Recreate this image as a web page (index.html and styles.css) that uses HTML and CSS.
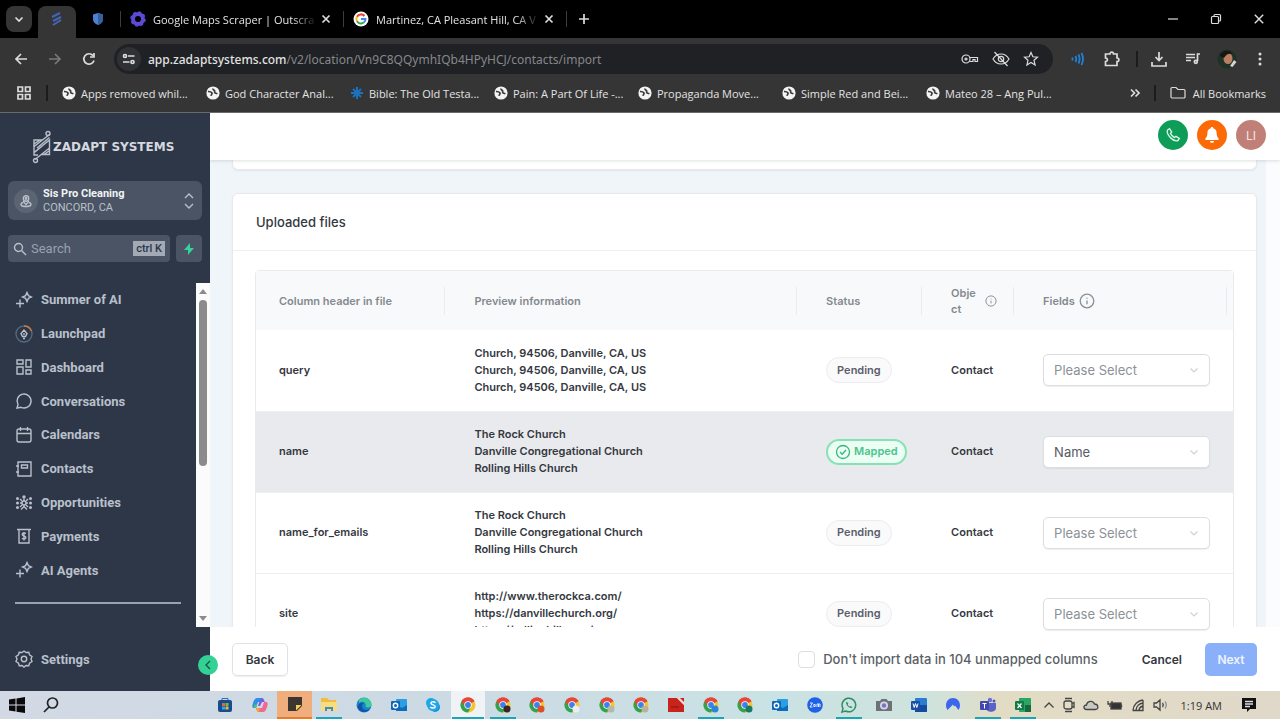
FILE: index.html
```html
<!DOCTYPE html>
<html lang="en">
<head>
  <meta charset="UTF-8" />
  <meta name="viewport" content="width=device-width, initial-scale=1.0" />
  <title>Zadapt Systems - Import contacts</title>
  <link rel="stylesheet" href="styles.css">
</head>
<body>
  <!-- shared icons -->
  <svg class="sprite" aria-hidden="true">
    <symbol id="globe" viewBox="0 0 14 14"><circle cx="7" cy="7" r="6.6" fill="#f1f3f4"/><path d="M2 5.500c2 .2 3.600.3 4 1.500.3 1-1 1.300-.8 2.800M7 2.500c-.4 1.500 1.200 1.200 1.600 2.300.3 1-.6 1.700.6 2.200 1 .4 1.500.2 2 1" fill="none" stroke="#3a3a3a" stroke-width="1.700"/></symbol>
    <symbol id="chrome" viewBox="0 0 16 16"><circle cx="8" cy="8" r="7.500" fill="#f7c52b"/><path d="M8 8 1.500 4.250A7.500 7.500 0 0 1 14.500 4.250z" fill="#e5473a"/><path d="M8 8 1.500 4.250A7.500 7.500 0 0 0 8 15.500l3-5.500z" fill="#2fa352"/><path d="M8 4.300h6.500A7.500 7.500 0 0 0 1.500 4.250L4.800 9.800z" fill="#e5473a"/><circle cx="8" cy="8" r="3.700" fill="#fff"/><circle cx="8" cy="8" r="2.900" fill="#3d80ea"/></symbol>
    <symbol id="outlook" viewBox="0 0 16 16"><rect x="5" y="2" width="11" height="12" rx="1" fill="#2a9fe4"/><path d="M5 8l6 3 5-3v6H5z" fill="#0f6cbd"/><rect y="4" width="9" height="9" rx="1" fill="#0f67b8"/><circle cx="4.500" cy="8.500" r="2.200" fill="none" stroke="#fff" stroke-width="1.400"/></symbol>
    <symbol id="sparkle" viewBox="0 0 18 18"><path d="M12 1.500l1.400 3.100 3.100 1.400-3.100 1.400L12 10.500l-1.400-3.100L7.500 6l3.100-1.400zM5 8.500v8M1 12.500h8"/></symbol>
    <symbol id="info" viewBox="0 0 16 16"><circle cx="8" cy="8" r="6.800"/><path d="M8 7.500v3.700M8 4.800v1"/></symbol>
    <symbol id="down" viewBox="0 0 10 10"><path d="M1.500 3.500 5 7l3.500-3.500"/></symbol>
    <symbol id="close" viewBox="0 0 10 10"><path d="M1.500 1.500l7 7M8.500 1.500l-7 7"/></symbol>
  </svg>

  <header class="browser">
    <div class="tabs">
      <button class="tab-search" aria-label="Search tabs"><svg class="line" width="10" height="10"><use href="#down"/></svg></button>
      <div class="tab tab-active"><svg width="14" height="16" viewBox="0 0 14 16" fill="none" stroke="#4166b8" stroke-width="2"><path d="M2 6l8-4M3 10l8-4M3 14l8-5"/></svg></div>
      <div class="tab tab-pinned"><svg width="14" height="14" viewBox="0 0 14 14"><path d="M7 1l5 1.500v5C12 10 10 12 7 13 4 12 2 10 2 7.500v-5z" fill="#4f7fd0"/><path d="M7 1v12c3-1 5-3 5-5.500v-5z" fill="#35609f"/></svg></div>
      <div class="tab tab-wide">
        <svg width="16" height="16" viewBox="0 0 16 16"><circle cx="8" cy="8" r="5" fill="none" stroke="#5b4ad6" stroke-width="4"/><circle cx="8" cy="8" r="7" fill="none" stroke="#5b4ad6" stroke-width="1.500" stroke-dasharray="3 2.500"/></svg>
        <span class="tab-title">Google Maps Scraper | Outscra</span>
        <button class="tab-close" aria-label="Close tab"><svg class="line" width="10" height="10"><use href="#close"/></svg></button>
      </div>
      <div class="tab tab-wide">
        <svg width="16" height="16" viewBox="0 0 16 16"><circle cx="8" cy="8" r="7.500" fill="#fff"/><g fill="none" stroke-width="2"><path d="M11.500 5A4.600 4.600 0 0 0 4 5.700" stroke="#ea4335"/><path d="M4 5.700a4.600 4.600 0 0 0 0 4.600" stroke="#fbbc05"/><path d="M4 10.300a4.600 4.600 0 0 0 7 1" stroke="#34a853"/><path d="M11 11.300A4.600 4.600 0 0 0 12.500 8H8" stroke="#4285f4"/></g></svg>
        <span class="tab-title">Martinez, CA Pleasant Hill, CA V</span>
        <button class="tab-close" aria-label="Close tab"><svg class="line" width="10" height="10"><use href="#close"/></svg></button>
      </div>
      <button class="tab-new" aria-label="New tab"><svg class="line" width="12" height="12" viewBox="0 0 12 12"><path d="M6 1v10M1 6h10"/></svg></button>
      <div class="window-controls">
        <button aria-label="Minimize"><svg class="thin" width="12" height="12" viewBox="0 0 12 12"><path d="M1 6h10"/></svg></button>
        <button aria-label="Restore"><svg class="thin" width="12" height="12" viewBox="0 0 12 12"><rect x="1.500" y="3.500" width="7" height="7" rx="1"/><path d="M4 3.500v-1c0-.6.4-1 1-1h4.500c.6 0 1 .4 1 1V7c0 .6-.4 1-1 1h-1"/></svg></button>
        <button aria-label="Close window"><svg class="thin" width="12" height="12"><use href="#close"/></svg></button>
      </div>
    </div>

    <div class="toolbar">
      <button aria-label="Back"><svg class="line" width="14" height="14" viewBox="0 0 14 14"><path d="M13 7H2M7 2 2 7l5 5"/></svg></button>
      <button class="dim" aria-label="Forward"><svg class="line" width="14" height="14" viewBox="0 0 14 14"><path d="M1 7h11M7 2l5 5-5 5"/></svg></button>
      <button aria-label="Reload"><svg class="line" width="14" height="14" viewBox="0 0 14 14"><path d="M12 8.500A5.200 5.200 0 1 1 11 3.600M12 1v4H8"/></svg></button>
      <div class="address">
        <span class="site-info"><svg class="line" width="14" height="14" viewBox="0 0 14 14"><path d="M6 4h6.500M1 10h6.500"/><circle cx="3" cy="4" r="1.500"/><circle cx="10.500" cy="10" r="1.500"/></svg></span>
        <span class="url"><b>app.zadaptsystems.com</b>/v2/location/Vn9C8QQymhIQb4HPyHCJ/contacts/import</span>
        <svg class="thin" width="18" height="14" viewBox="0 0 18 14"><circle cx="5" cy="7" r="4"/><circle cx="5" cy="7" r="1"/><path d="M9 5.500h7.500v4H14v-2h-2v2H8.500"/></svg>
        <svg class="thin" width="18" height="16" viewBox="0 0 18 16"><path d="M1 8c2-3.500 5-5 8-5s6 1.500 8 5c-2 3.500-5 5-8 5s-6-1.500-8-5z"/><circle cx="9" cy="8" r="2.700"/><path d="M2.500 1l13 14"/></svg>
        <svg class="thin" width="16" height="16" viewBox="0 0 16 16"><path d="M8 1.500l1.900 4.300 4.600.4-3.500 3.100 1.100 4.600L8 11.500l-4.100 2.400L5 9.300 1.500 6.200l4.600-.4z"/></svg>
      </div>
      <button aria-label="Audio"><svg width="14" height="14" viewBox="0 0 14 14" fill="none" stroke="#2181d8" stroke-width="1.800"><path d="M1.500 5.500v3M4.500 4c1 2 1 4 0 6M7.500 2.500c1.500 3 1.500 6 0 9M10.500 1c2 4 2 8 0 12"/></svg></button>
      <button aria-label="Extensions"><svg class="line" width="18" height="18" viewBox="0 0 18 18"><path d="M2.500 4H7c0-2.500 3.500-2.500 3.500 0H14v4c2.500 0 2.500 3.500 0 3.500v4H2.500v-4c2.500 0 2.500-3.500 0-3.500z"/></svg></button>
      <i class="bar"></i>
      <button aria-label="Downloads"><svg class="line" width="18" height="18" viewBox="0 0 18 18"><path d="M9 2v8M5.500 7 9 10.500 12.500 7M2 12v4h14v-4"/></svg></button>
      <button aria-label="Media"><svg class="line" width="16" height="16" viewBox="0 0 16 16"><path d="M1 3.500h9M1 6.500h9M1 9.500h5M12.500 10V3H15"/><circle cx="10.800" cy="10.800" r="1.500"/></svg></button>
      <button class="profile" aria-label="Profile"><svg width="20" height="20" viewBox="0 0 20 20"><circle cx="10" cy="10" r="9.500" fill="#1d3325"/><ellipse cx="11" cy="9.500" rx="4.500" ry="5.500" fill="#b97f63"/><path d="M3 7C5 0 14 1 15 5c-3-1-6 0-8 4z" fill="#1a1413"/><path d="M13 17l4-6 2.500 2-4 5z" fill="#d7d3d6"/></svg></button>
      <button aria-label="Menu"><svg width="4" height="16" viewBox="0 0 4 16" fill="#dcdcdc"><circle cx="2" cy="3" r="1.500"/><circle cx="2" cy="8" r="1.500"/><circle cx="2" cy="13" r="1.500"/></svg></button>
    </div>

    <nav class="bookmarks">
      <svg class="line apps" width="16" height="16" viewBox="0 0 16 16"><path d="M2 2h4.500v4.500H2zM9.500 2H14v4.500H9.500zM2 9.500h4.500V14H2zM9.500 9.500H14V14H9.500z"/></svg>
      <i class="bar"></i>
      <a href="#"><svg width="14" height="14"><use href="#globe"/></svg>Apps removed whil...</a>
      <a href="#"><svg width="14" height="14"><use href="#globe"/></svg>God Character Anal...</a>
      <a href="#"><svg width="14" height="14" viewBox="0 0 14 14" stroke="#1b73bd" stroke-width="2"><path d="M7 1v12M1 7h12M3 3l8 8M11 3l-8 8"/></svg>Bible: The Old Testa...</a>
      <a href="#"><svg width="14" height="14"><use href="#globe"/></svg>Pain: A Part Of Life -...</a>
      <a href="#"><svg width="14" height="14"><use href="#globe"/></svg>Propaganda Move...</a>
      <a href="#"><svg width="14" height="14"><use href="#globe"/></svg>Simple Red and Bei...</a>
      <a href="#"><svg width="14" height="14"><use href="#globe"/></svg>Mateo 28 – Ang Pul...</a>
      <div class="bookmarks-end">
        <button aria-label="More bookmarks"><svg class="line" width="10" height="10" viewBox="0 0 10 10"><path d="M1 1.500 4.500 5 1 8.500M5.500 1.500 9 5 5.500 8.500"/></svg></button>
        <i class="bar"></i>
        <a href="#"><svg class="thin" width="16" height="14" viewBox="0 0 16 14"><path d="M1 2.500C1 2 1.500 1.500 2 1.500h4l2 2h6c.5 0 1 .5 1 1V11c0 .5-.5 1-1 1H2c-.5 0-1-.5-1-1z"/></svg>All Bookmarks</a>
      </div>
    </nav>
  </header>

  <div class="app">
    <aside class="sidebar">
      <div class="logo">
        <svg width="20" height="34" viewBox="0 0 20 34"><path d="M3 29.500 17.500 18V10L2 22.500M17.500 4.500 2 16.500V10h8.500M2 17v8h4M2 14l6-4M5 18 17.500 7.500M3 22l12-10M17.500 18v6.500H9M17 21l-5 3.500"/><circle cx="16" cy="3.500" r="2"/><circle cx="3.500" cy="30.500" r="2"/></svg>
        <span>ZADAPT SYSTEMS</span>
      </div>
      <button class="location">
        <span class="location-icon"><svg width="14" height="14" viewBox="0 0 14 14"><circle cx="7" cy="4.500" r="2.700"/><circle cx="7" cy="4.500" r=".7"/><path d="M4.500 7c0 2 1.500 2 2.500 3.500C8 9 9.500 9 9.500 7M4 8.500c-3 1-3 4 3 4s6-3 3-4"/></svg></span>
        <span class="location-text"><strong>Sis Pro Cleaning</strong><span>CONCORD, CA</span></span>
        <svg width="10" height="16" viewBox="0 0 10 16"><path d="M1 5l4-4 4 4M1 11l4 4 4-4"/></svg>
      </button>
      <div class="search-row">
        <label class="search">
          <svg width="14" height="14" viewBox="0 0 14 14"><circle cx="5.500" cy="5.500" r="4"/><path d="M8.500 8.500 13 13"/></svg>
          <input type="text" placeholder="Search" aria-label="Search">
          <kbd>ctrl K</kbd>
        </label>
        <button class="bolt" aria-label="Quick actions"><svg width="12" height="14" viewBox="0 0 12 14"><path d="M7 1 1 8h4v5l6-7H7z" fill="#31d49b"/></svg></button>
      </div>
      <div class="nav-scroll">
        <nav class="nav-list">
          <div class="nav-items">
            <a href="#"><svg width="18" height="18"><use href="#sparkle"/></svg>Summer of AI</a>
            <a href="#"><svg width="18" height="18" viewBox="0 0 18 18"><circle cx="9" cy="9" r="8" stroke="#56677c"/><path d="M9 1a8 8 0 0 1 7.500 5" stroke="#c97b3c"/><path d="M7.500 11.500 6 8.500 9 5l3 3.500-1.500 3zM9 8v2M8 13.500h2"/></svg>Launchpad</a>
            <a href="#"><svg width="18" height="18" viewBox="0 0 18 18"><path d="M2 2h6v4H2zM11 2h5v7h-5zM2 9h6v7H2zM11 12h5v4h-5z"/></svg>Dashboard</a>
            <a href="#"><svg width="18" height="18" viewBox="0 0 18 18"><path d="M2 16l1-3.500A7 7 0 1 1 6 15.300z"/></svg>Conversations</a>
            <a href="#"><svg width="18" height="18" viewBox="0 0 18 18"><rect x="2" y="3" width="14" height="13" rx="2"/><path d="M2 7.500h14M5.500 1v4M12.500 1v4"/></svg>Calendars</a>
            <a href="#"><svg width="18" height="18" viewBox="0 0 18 18"><path d="M3 2h13v14H3zM1 6h3M1 12h3M6.500 5h6v3h-6z"/></svg>Contacts</a>
            <a href="#"><svg width="18" height="18" viewBox="0 0 18 18"><circle cx="9" cy="9" r="2"/><path d="M9 4.500V7M9 11v3M6 15.500l3-3 3 3M5 9h2M11 9h2M5 5l2 2M13 5l-2 2M5 13l2-2M13 13l-2-2"/><g fill="#b9c0cb"><circle cx="9" cy="3" r="1"/><circle cx="2.500" cy="4.500" r=".8"/><circle cx="15.500" cy="4.500" r=".8"/><circle cx="2.500" cy="9" r=".8"/><circle cx="15.500" cy="9" r=".8"/><circle cx="2.500" cy="13.500" r=".8"/><circle cx="15.500" cy="13.500" r=".8"/></g></svg>Opportunities</a>
            <a href="#"><svg width="18" height="18" viewBox="0 0 18 18"><path d="M2 2.500h14M4 2.500V16h10V2.500M11 6.500C8.500 5 6.500 6.500 7.500 8s4 .8 3.300 3c-.5 1.300-2.500 1.300-3.800.3M9 5v8.500"/></svg>Payments</a>
            <a href="#"><svg width="18" height="18"><use href="#sparkle"/></svg>AI Agents</a>
          </div>
          <hr>
        </nav>
        <div class="scrollbar"><i class="arrow-up"></i><i class="thumb"></i><i class="arrow-down"></i></div>
      </div>
      <a class="settings" href="#"><svg width="18" height="18" viewBox="0 0 18 18"><path d="M9 1l2 1.500 2.800-.3.700 2.700L17 6.500 16 9l1 2.500-2.500 1.600-.7 2.700-2.800-.3L9 17l-2-1.500-2.800.3-.7-2.700L1 11.500 2 9 1 6.500l2.500-1.600.7-2.700 2.800.3z"/><circle cx="9" cy="9" r="2.700"/></svg>Settings</a>
      <button class="collapse" aria-label="Collapse sidebar"><svg width="8" height="10" viewBox="0 0 8 10"><path d="M6 1 2 5l4 4"/></svg></button>
    </aside>

    <main class="main">
      <header class="topbar">
        <button class="round green" aria-label="Call"><svg width="16" height="16" viewBox="0 0 16 16" fill="none" stroke="#d9f6e6" stroke-width="1.400"><path d="M2.500 3 4.500 1.700 6.700 5 5.500 6.500c.8 1.800 2 3 4 4l1.500-1.200 3.300 2.200L13 13.500C9 15.500 1 8 2.500 3z"/></svg></button>
        <button class="round orange" aria-label="Notifications"><svg width="16" height="18" viewBox="0 0 16 18" fill="#fff"><path d="M8 1c.8 0 1.300.5 1.300 1.200C11.500 2.800 12.600 4.600 12.600 7c0 3 .9 4.300 2 5.500V14H1.400v-1.500c1.100-1.200 2-2.500 2-5.500 0-2.400 1.100-4.200 3.300-4.800C6.700 1.500 7.200 1 8 1zM6 15h4a2 2 0 0 1-4 0z"/></svg></button>
        <button class="round rose">LI</button>
      </header>

      <div class="content">
        <div class="scroll-area">
          <section class="card card-prev"></section>
          <section class="card">
            <h2>Uploaded files</h2>
            <div class="table-wrap">
              <table>
                <colgroup><col class="c-header"><col class="c-preview"><col class="c-status"><col class="c-object"><col class="c-fields"></colgroup>
                <thead>
                  <tr>
                    <th><div>Column header in file</div></th>
                    <th><div>Preview information</div></th>
                    <th><div>Status</div></th>
                    <th><div><span class="object-label">Object</span><svg width="12" height="12"><use href="#info"/></svg></div></th>
                    <th><div>Fields<svg width="16" height="16"><use href="#info"/></svg></div></th>
                  </tr>
                </thead>
                <tbody>
                  <tr>
                    <td>query</td>
                    <td>Church, 94506, Danville, CA, US<br>Church, 94506, Danville, CA, US<br>Church, 94506, Danville, CA, US</td>
                    <td><span class="tag">Pending</span></td>
                    <td>Contact</td>
                    <td><div class="select empty"><select aria-label="Field for query"><option>Please Select</option></select><svg width="10" height="10"><use href="#down"/></svg></div></td>
                  </tr>
                  <tr class="active">
                    <td>name</td>
                    <td>The Rock Church<br>Danville Congregational Church<br>Rolling Hills Church</td>
                    <td><span class="tag mapped"><svg width="16" height="16" viewBox="0 0 16 16"><circle cx="8" cy="8" r="6.500"/><path d="M5 8l2.200 2.200L11 6"/></svg>Mapped</span></td>
                    <td>Contact</td>
                    <td><div class="select"><select aria-label="Field for name"><option>Name</option></select><svg width="10" height="10"><use href="#down"/></svg></div></td>
                  </tr>
                  <tr>
                    <td>name_for_emails</td>
                    <td>The Rock Church<br>Danville Congregational Church<br>Rolling Hills Church</td>
                    <td><span class="tag">Pending</span></td>
                    <td>Contact</td>
                    <td><div class="select empty"><select aria-label="Field for name_for_emails"><option>Please Select</option></select><svg width="10" height="10"><use href="#down"/></svg></div></td>
                  </tr>
                  <tr>
                    <td>site</td>
                    <td>http://www.therockca.com/<br>https://danvillechurch.org/<br>https://rollinghills.org/</td>
                    <td><span class="tag">Pending</span></td>
                    <td>Contact</td>
                    <td><div class="select empty"><select aria-label="Field for site"><option>Please Select</option></select><svg width="10" height="10"><use href="#down"/></svg></div></td>
                  </tr>
                </tbody>
              </table>
            </div>
          </section>
        </div>
      </div>

      <footer class="actions">
        <button class="btn btn-back">Back</button>
        <label class="skip"><input type="checkbox">Don't import data in 104 unmapped columns</label>
        <button class="btn btn-cancel">Cancel</button>
        <button class="btn btn-next">Next</button>
      </footer>
    </main>
  </div>

  <footer class="taskbar">
    <div class="start">
      <svg width="16" height="16" viewBox="0 0 16 16" fill="#0a0a0a"><path d="M0 2.500 6.500 1.500v6H0zM7.500 1.400 16 0v7.500H7.500zM0 8.500h6.500v6L0 13.500zM7.500 8.500H16V16l-8.500-1.300z"/></svg>
      <svg width="16" height="16" viewBox="0 0 16 16" fill="none" stroke="#222" stroke-width="1.700"><circle cx="9.500" cy="6" r="5"/><path d="M6 10l-5 5"/></svg>
    </div>
    <div class="pinned">
      <span><svg width="16" height="16" viewBox="0 0 16 16"><rect x="1" y="3" width="14" height="12" rx="2" fill="#174d8c"/><path d="M5 3V1.500h6V3" fill="none" stroke="#2573b8"/><path d="M5 6h3v3H5z" fill="#e8623a"/><path d="M8.500 6h3v3h-3z" fill="#7cbb42"/><path d="M5 9.500h3v3H5z" fill="#35a4e8"/><path d="M8.500 9.500h3v3h-3z" fill="#f4b92f"/></svg></span>
      <span><svg width="16" height="16" viewBox="0 0 16 16"><path d="M5 1h5l2 4H6L4 11H2C0 11 0 9 1 6s2-5 4-5z" fill="#2d8fe6"/><path d="M10 1c2 0 2 3 3 4h-3L8 9H6l2-6z" fill="#7a5ce0"/><path d="M11 15H6l-2-4h6l2-6h2c2 0 2 2 1 5s-2 5-4 5z" fill="#ee6b8f"/><path d="M4 11h4l-1 4C5 15 4 13 4 11z" fill="#f0a13a"/><path d="M2 8l3-1-1 4H2z" fill="#4fc07a"/></svg></span>
      <span class="alert"><svg width="14" height="14" viewBox="0 0 14 14"><path d="M0 0h14v9l-5 5H0z" fill="#3b3631"/><path d="M8 8h5.500L8 13.500z" fill="#f7d04b"/></svg></span>
      <span class="open"><svg width="16" height="16" viewBox="0 0 16 16"><path d="M0 1h6l2 2h7v10H0z" fill="#f0bd3f"/><path d="M0 5h16v9H0z" fill="#fbdc7c"/><path d="M4 14v-4h8v4h-2v-2H6v2z" fill="#3b8dc9"/></svg></span>
      <span><svg width="16" height="16" viewBox="0 0 16 16"><circle cx="8" cy="8" r="7.500" fill="#1583cf"/><path d="M3 3c5-5 13-1 12.500 5-.5 3-5 3-6 1.500C11 6 7 3 3 6z" fill="#3ecb98"/><path d="M6 9c0 4 4 5 8 3-3 4-10 4-12-1C1 7 5 5 8 6 6 7 6 8 6 9z" fill="#1254a3"/></svg></span>
      <span><svg width="16" height="16"><use href="#outlook"/></svg></span>
      <span><svg width="16" height="16" viewBox="0 0 16 16"><circle cx="6" cy="6" r="5" fill="#1aa6e8"/><circle cx="10" cy="10" r="5" fill="#1690d4"/><circle cx="8" cy="8" r="6" fill="#20a8ea"/><path d="M10.500 5.800C8.500 4 5.500 5 6 6.500S10.500 8 10.300 9.700 6.500 11.500 5.300 10" fill="none" stroke="#fff" stroke-width="1.400"/></svg></span>
      <span class="open current"><svg width="16" height="16"><use href="#chrome"/></svg></span>
      <span class="open"><svg width="16" height="16"><use href="#chrome"/><circle cx="12" cy="12" r="3.500" fill="#3a2522"/></svg></span>
      <span><svg width="16" height="16"><use href="#chrome"/><circle cx="12" cy="12" r="3.500" fill="#d9512c"/></svg></span>
      <span><svg width="16" height="16"><use href="#chrome"/><circle cx="12" cy="12" r="3.500" fill="#e9eef2"/></svg></span>
      <span><svg width="16" height="16"><use href="#chrome"/><circle cx="12" cy="12" r="3.500" fill="#b5b9a8"/></svg></span>
      <span><svg width="16" height="16"><use href="#chrome"/><circle cx="12" cy="12" r="3.500" fill="#b9b39b"/></svg></span>
      <span><svg width="16" height="16" viewBox="0 0 16 16"><path d="M0 1h9l7 7v7H0z" fill="#c8231d"/><path d="M9 1l7 7V1z" fill="#efd9d6"/><path d="M12 1l4 0v4z" fill="#c8231d"/><path d="M3 10h8" stroke="#8e1511"/></svg></span>
      <span class="open"><svg width="16" height="16"><use href="#chrome"/><circle cx="12" cy="12" r="3.500" fill="#2c86d8"/></svg></span>
      <span><svg width="16" height="16"><use href="#chrome"/><circle cx="12" cy="12" r="3.500" fill="#177a62"/></svg></span>
      <span><svg width="16" height="16"><use href="#outlook"/></svg></span>
      <span><svg width="16" height="16" viewBox="0 0 16 16"><circle cx="8" cy="8" r="7.800" fill="#1f62e6"/><path d="M3 6h2.500L3 10h2.500M6.800 7.500h1.400v2H6.800zM10 10V7h3v3M11.500 7v3" fill="none" stroke="#dfe9ff"/></svg></span>
      <span class="open"><svg width="16" height="16" viewBox="0 0 16 16" fill="none" stroke="#2f8f62" stroke-width="1.500"><path d="M1 15l1-3.600A6.800 6.800 0 1 1 4.700 14z"/><path d="M5.500 4.500c-1 1.500 0 3.500 1.500 5s3.300 2 4.500.8l-1.700-1.300-1 .6C7.700 9 7.200 8.300 6.800 7.200l.6-.8z" fill="#2f8f62" stroke="none"/></svg></span>
      <span><svg width="16" height="14" viewBox="0 0 16 14"><path d="M0 3h4l1.500-2h5L12 3h4v10H0z" fill="#6c7278"/><circle cx="8" cy="7.500" r="4" fill="#d8d5ee"/><circle cx="8" cy="7.500" r="2.200" fill="#7b76b8"/></svg></span>
      <span><svg width="16" height="16" viewBox="0 0 16 16"><rect x="4" y="1" width="12" height="14" rx="1" fill="#2b7cd3"/><path d="M4 8h12v6c0 .6-.4 1-1 1H4z" fill="#164a9e"/><rect y="4" width="9" height="9" rx="1" fill="#174fa8"/><path d="M2 6.500l1.200 4 1.300-4 1.300 4 1.200-4" fill="none" stroke="#fff"/></svg></span>
      <span><svg width="16" height="16" viewBox="0 0 16 16"><path d="M2.500 13C-1 8 2 1 8 1s9 7 5.500 12L10 8.500 9 9.500 8 7.500z" fill="#3d66ec"/></svg></span>
      <span class="open"><svg width="16" height="16" viewBox="0 0 16 16"><circle cx="10" cy="3" r="2.200" fill="#6a70d0"/><circle cx="14" cy="4" r="1.500" fill="#4e55bd"/><path d="M6 6h10v5c0 5-10 5-10 0z" fill="#5c63c8"/><rect y="4" width="9" height="9" rx="1" fill="#4249ae"/><path d="M2.500 6.500h4M4.500 6.500v5" stroke="#fff"/></svg></span>
      <span class="open"><svg width="16" height="16" viewBox="0 0 16 16"><rect x="4" y="1" width="12" height="14" rx="1" fill="#2aa566"/><path d="M10 8h6v7h-6z" fill="#15693c"/><rect y="4" width="9" height="9" rx="1" fill="#117a43"/><path d="M2.500 6.500l4 4.500M6.500 6.500l-4 4.500" stroke="#fff" stroke-width="1.200"/></svg></span>
    </div>
    <div class="tray">
      <svg width="12" height="12" viewBox="0 0 12 12"><path d="M1.500 8.500 6 4l4.500 4.500"/></svg>
      <svg width="12" height="16" viewBox="0 0 12 16"><rect x="1" y="4" width="8" height="8" rx="2"/><path d="M9 6.500 11 5.500v5L9 9.500M2 1.500h7M2 14.500h7"/></svg>
      <svg width="16" height="12" viewBox="0 0 16 12"><path d="M4 10.500C0 10.500 0 6 3.500 6 4 1.500 10 1 11.500 5c4 0 4.500 5.500 1 5.500z" fill="#c9c9c4"/></svg>
      <svg width="16" height="12" viewBox="0 0 16 12"><rect x="4" y="4" width="10" height="6" fill="#333"/><path d="M14.500 5.500v3M1 2v3h4V2M3 5v3"/></svg>
      <svg width="14" height="14" viewBox="0 0 14 14"><path d="M2 12A11 11 0 0 1 12 2M5 12a8 8 0 0 1 7-7M8 12a5 5 0 0 1 4-4M1.500 12.500h10.500V2"/></svg>
      <svg width="16" height="14" viewBox="0 0 16 14"><path d="M1 5h2.500L7 2v10L3.500 9H1zM9.500 5c1 1.300 1 2.700 0 4"/><path d="M12 3.500c1.700 2.300 1.700 4.700 0 7" opacity=".5"/></svg>
      <time>1:19 AM</time>
      <svg class="notice" width="16" height="16" viewBox="0 0 16 16"><path d="M1 1h14v11H9l-3 3v-3H1z" fill="#111"/><path d="M4 4.500h8M4 7h8M4 9.500h5" stroke="#ddd"/></svg>
    </div>
  </footer>
</body>
</html>
```

FILE: styles.css
```css
* { box-sizing: border-box; }
body { margin: 0; height: 100vh; display: flex; flex-direction: column; overflow: hidden; font-family: Inter, sans-serif; font-size: 12px; color: #34383f; background: #fff; }
button { border: 0; padding: 0; background: none; font: inherit; color: inherit; display: flex; align-items: center; justify-content: center; cursor: pointer; }
a { color: inherit; text-decoration: none; }
svg { flex: none; display: block; }
.sprite { position: absolute; width: 0; height: 0; }
.line, .thin { fill: none; stroke: #dcdcdc; stroke-width: 1.7; }
.thin { stroke-width: 1.2; }

/* browser */
.browser { flex: none; background: #353535; color: #e3e3e3; font-family: "Open Sans", sans-serif; font-size: 11px; border-bottom: 1px solid #6b6b6d; }
.tabs { display: flex; align-items: center; height: 38px; background: #000; padding-left: 6px; }
.tab-search { width: 26px; height: 26px; border-radius: 8px; background: #353535; }
.tab { display: flex; align-items: center; }
.tab-active { align-self: flex-end; justify-content: center; width: 38px; height: 32px; margin-left: 6px; padding-bottom: 6px; border-radius: 8px 8px 0 0; background: #353535; }
.tab-pinned { width: 45px; height: 16px; justify-content: center; border-right: 1px solid #3c3c3c; }
.tab-wide { width: 223px; height: 16px; padding: 0 12px 0 9px; border-right: 1px solid #3c3c3c; }
.tab-title { flex: 1; margin: 0 4px 0 7px; white-space: nowrap; font-weight: 500; -webkit-mask-image: linear-gradient(to right, #000 85%, transparent); mask-image: linear-gradient(to right, #000 85%, transparent); }
.tab-new { width: 34px; height: 24px; }
.window-controls { margin-left: auto; display: flex; }
.window-controls button { width: 43px; height: 37px; }
.toolbar { display: flex; align-items: center; height: 42px; padding: 0 18px 0 14px; }
.toolbar > button { width: 14px; margin-right: 20px; }
.toolbar > .dim { opacity: .4; }
.toolbar .address { flex: 1; display: flex; align-items: center; gap: 13px; height: 30px; margin: 0 18px 0 -2px; padding: 0 14px 0 3px; border-radius: 15px; background: #202124; color: #85878a; font: 12px "Noto Sans", sans-serif; }
.site-info { display: flex; align-items: center; justify-content: center; width: 24px; height: 24px; border-radius: 12px; background: #303134; }
.url { flex: 1; margin-left: -6px; white-space: nowrap; }
.url b { font-weight: 500; color: #e3e3e3; }
.bar { width: 2px; height: 16px; background: #1c1c1c; }
.toolbar .bar { margin: 0 14px 0 -3px; }
.toolbar .profile { margin-right: 24px; }
.toolbar > button:last-child { width: 4px; margin: 0; }
.bookmarks { display: flex; align-items: center; height: 32px; padding: 0 14px 6px 16px; font-weight: 500; }
.bookmarks .bar { flex: none; margin: 0 14px; }
.bookmarks > a { display: flex; align-items: center; gap: 5px; flex: 0 1 144px; white-space: nowrap; }
.bookmarks-end { margin-left: auto; display: flex; align-items: center; }
.bookmarks-end a { display: flex; align-items: center; gap: 7px; white-space: nowrap; }

/* app shell */
.app { flex: 1; min-height: 0; display: flex; overflow: hidden; }
.sidebar { position: relative; z-index: 4; flex: none; width: 210px; display: flex; flex-direction: column; background: #2d3748; color: #b9c0cb; font-family: Roboto, sans-serif; }
.sidebar svg { fill: none; stroke: #b9c0cb; stroke-width: 1.4; }
.logo { display: flex; align-items: center; gap: 1px; height: 68px; padding-left: 32px; color: #d5d9df; font: bold 12px "DejaVu Sans", sans-serif; white-space: nowrap; }
.location { margin: 0 8px; height: 39px; padding: 0 8px 0 6px; gap: 5px; border-radius: 6px; background: #4a5464; text-align: left; }
.location-icon { display: flex; align-items: center; justify-content: center; width: 24px; height: 24px; border-radius: 12px; background: #5b6472; }
.location-text { flex: 1; display: flex; flex-direction: column; font-size: 11px; line-height: 14px; }
.location-text strong { color: #f1f3f5; font-weight: 700; }
.search-row { display: flex; gap: 6px; margin: 15px 8px 0; }
.search { flex: 1; min-width: 0; display: flex; align-items: center; gap: 4px; height: 27px; padding: 0 5px; border-radius: 4px; background: #4a5464; }
.search input { flex: 1; width: 0; min-width: 0; border: 0; padding: 0; background: none; color: #fff; font: 13px Roboto, sans-serif; outline: 0; }
.search input::placeholder { color: #98a1ae; opacity: 1; }
.search kbd { padding: 0 3px; background: #a3aab5; color: #2d3748; font: 500 11px/15px Roboto, sans-serif; white-space: nowrap; }
.bolt { flex: none; width: 26px; height: 27px; border-radius: 4px; background: #4a5464; }
.sidebar .bolt svg { stroke: none; }
.nav-scroll { flex: 1; min-height: 0; margin-top: 21px; display: flex; }
.nav-list { flex: 1; overflow: hidden; padding-right: 15px; }
.nav-items { display: grid; grid-auto-rows: 1fr; height: 304px; padding-left: 15px; }
.nav-items a, .settings { display: flex; align-items: center; gap: 8px; font-size: 13px; font-weight: 700; }
.nav-list hr { margin: 15px 0 0 15px; border: 0; border-top: 2px solid #99a2af; }
.scrollbar { width: 14px; display: flex; flex-direction: column; align-items: center; background: #fbfbfb; padding: 6px 0; }
.arrow-up, .arrow-down { border: 4px solid transparent; }
.arrow-up { border-top: 0; border-bottom: 5px solid #8b8b8b; }
.arrow-down { border-bottom: 0; border-top: 5px solid #8b8b8b; margin-top: auto; }
.thumb { width: 8px; height: 50%; margin-top: 6px; border-radius: 4px; background: #8b8b8b; }
.settings { flex: none; height: 64px; padding-left: 15px; }
.collapse { position: absolute; right: -8px; bottom: 16px; width: 20px; height: 20px; border-radius: 10px; background: #34d197; }
.sidebar .collapse svg { stroke: #14583f; }

/* main */
.main { flex: 1; min-width: 0; display: flex; flex-direction: column; position: relative; }
.topbar { position: relative; z-index: 3; flex: none; display: flex; justify-content: flex-end; gap: 9px; height: 47px; padding: 7px 14px 0 0; background: #fff; box-shadow: 0 1px 3px rgba(30, 50, 70, .15); }
.round { width: 30px; height: 30px; border-radius: 15px; color: #f4e6e4; font-size: 12px; }
.green { background: #0d9d58; }
.orange { background: #fb6a06; }
.rose { background: #c08078; }
.content { flex: 1; min-height: 0; background: #f0f5f9; border-right: 14px solid #fbfcfd; }
.scroll-area { padding: 0 9px 0 22px; }
.card { background: #fff; border: 1px solid #e6eaee; border-radius: 6px; box-shadow: 0 1px 2px rgba(30, 50, 70, .08); }
.card-prev { height: 10px; margin-bottom: 23px; border-top: 0; border-radius: 0 0 6px 6px; }
.card h2 { margin: 0; padding: 18px 23px; border-bottom: 1px solid #edf0f3; font-size: 13px; line-height: 20px; font-weight: 500; }
.table-wrap { margin: 19px 22px 24px; border: 1px solid #e8eaee; border-radius: 4px; }
table { width: 100%; border-collapse: collapse; table-layout: fixed; }
.c-header { width: 20%; }
.c-preview { width: 36%; }
.c-status { width: 125px; }
.c-object { width: 92px; }
th { height: 59px; padding: 0 6px 0 23px; background: #f8f9fb; color: #84898f; font-size: 11px; line-height: 16px; font-weight: 600; text-align: left; }
th div { display: flex; align-items: center; height: 28px; border-right: 1px solid #e9ebee; gap: 4px; }
th svg { fill: none; stroke: #8b9096; stroke-width: 1.3; }
.object-label { width: 30px; word-break: break-all; }
td { height: 81px; padding: 0 0 0 23px; border-bottom: 1px solid #eceef0; font-size: 11px; line-height: 17px; font-weight: 600; }
td:last-child { padding-right: 23px; }
.active td { background: #e9eaed; }
.tag { display: inline-flex; align-items: center; gap: 3px; height: 26px; padding: 0 10px; border: 1px solid #ececf0; border-radius: 13px; background: #fafafb; color: #5b5f6b; vertical-align: middle; }
.mapped { padding: 0 7px; border: 2px solid #86e2b5; background: #ecfdf4; color: #4bc48c; }
.mapped svg { fill: none; stroke: #35b87a; stroke-width: 1.3; }
.select { position: relative; z-index: 2; }
.select select { appearance: none; display: block; width: 100%; height: 32px; padding: 0 10px; border: 1px solid #dcdee2; border-radius: 5px; background: #fff; color: #555a61; font: 13px Inter, sans-serif; box-shadow: 0 1px 1px rgba(30, 50, 70, .08); }
.select.empty select { color: #8c9198; }
.select svg { position: absolute; right: 11px; top: 11px; fill: none; stroke: #cfd2d6; stroke-width: 1.2; pointer-events: none; }
.actions { position: relative; z-index: 1; flex: none; display: flex; align-items: center; height: 64px; padding: 0 23px 0 22px; background: #fff; }
.btn { height: 33px; border-radius: 5px; font-size: 12px; font-weight: 600; }
.btn-back { width: 56px; border: 1px solid #dfe2e6; box-shadow: 0 1px 1px rgba(30, 50, 70, .08); }
.skip { margin-left: auto; display: flex; align-items: center; gap: 8px; color: #5a5f66; font-size: 13px; font-weight: 500; }
.skip input { appearance: none; width: 17px; height: 17px; margin: 0; border: 1px solid #dcdee2; border-radius: 4px; background: #fff; }
.btn-cancel { margin: 0 23px 0 44px; }
.btn-next { width: 52px; background: #8bb0fa; color: #eef4ff; }

/* taskbar */
.taskbar { position: relative; z-index: 5; flex: none; display: flex; height: 28px; background: linear-gradient(to right, #d2d9e5, #ccdae4 35%, #c9e2e4 60%, #cfe3dc 73%, #e3dcc4 78%, #e0d9ca); }
.start { display: flex; align-items: center; gap: 18px; width: 208px; padding-left: 9px; }
.pinned { display: grid; grid-template-columns: repeat(24, 1fr); flex: 0 1 832px; }
.pinned span { display: flex; align-items: center; justify-content: center; }
.open { background: linear-gradient(#1aa5b8, #1aa5b8) bottom / 26px 2px no-repeat; }
.current { background: linear-gradient(#1aa5b8, #1aa5b8) bottom / 32px 2px no-repeat, #eff3f6; }
.alert { background: #f0ae7c; border-bottom: 2px solid #ec7a24; }
.tray { margin-left: auto; display: flex; align-items: center; gap: 8px; padding-right: 23px; font: 11px "Open Sans", sans-serif; color: #333; white-space: nowrap; }
.tray svg { fill: none; stroke: #444; stroke-width: 1.3; }
.tray time { margin-left: 4px; }
.tray .notice { margin-left: 11px; stroke: none; }
```
